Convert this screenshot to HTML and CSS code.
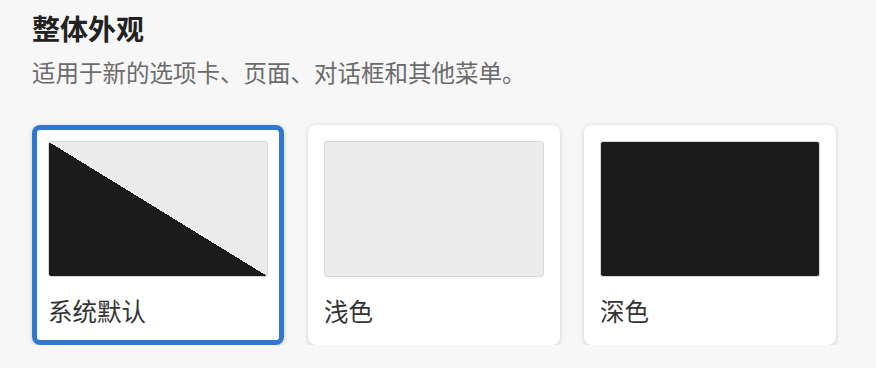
FILE: index.html
```html
<!DOCTYPE html>
<html lang="zh-CN">

<head>
    <meta charset="UTF-8">
    <meta name="viewport" content="width=device-width, initial-scale=1.0">
    <title>整体外观</title>
    <link rel="stylesheet" href="styles.css">
</head>

<body>

    <section class="appearance">
        <h1>整体外观</h1>
        <p class="hint">适用于新的选项卡、页面、对话框和其他菜单。</p>

        <div class="themes">
            <div class="theme selected">
                <div class="preview system"></div>
                <div class="label">系统默认</div>
            </div>
            <div class="theme">
                <div class="preview light"></div>
                <div class="label">浅色</div>
            </div>
            <div class="theme">
                <div class="preview dark"></div>
                <div class="label">深色</div>
            </div>
        </div>
    </section>

</body>

</html>
```

FILE: styles.css
```css
:root {
    --bg: #f7f7f7;
    --text: #222;
    --muted: #6b6b6b;
    --blue: #3177d0;
    --light: #ececec;
    --dark: #1b1b1b;
}

* {
    margin: 0;
    box-sizing: border-box;
    font-family: "Noto Sans CJK SC", "Noto Sans", sans-serif;
}

body {
    background-color: var(--bg);
    color: var(--text);
}

.appearance {
    padding: 8px 32px 0;
}

.appearance h1 {
    font-size: 28px;
    line-height: 40px;
    font-weight: bold;
}

.hint {
    margin-top: 8px;
    font-size: 23.5px;
    line-height: 32px;
    color: var(--muted);
}

.themes {
    display: flex;
    gap: 24px;
    margin-top: 37px;
}

.theme {
    width: 252px;
    height: 220px;
    padding: 16px 16px 0;
    background-color: white;
    border-radius: 8px;
    box-shadow: 0 1px 5px rgba(0, 0, 0, 0.18);
}

/* blue ring drawn inside so the layout doesn't move */
.theme.selected {
    box-shadow: inset 0 0 0 5px var(--blue), 0 1px 5px rgba(0, 0, 0, 0.18);
}

.preview {
    height: 136px;
    border: 1px solid #d8d8d8;
    border-radius: 3px;
}

.preview.light {
    background-color: var(--light);
}

.preview.dark {
    background-color: var(--dark);
}

.preview.system {
    background-image: linear-gradient(to top right, var(--dark) 50%, var(--light) 50%);
}

.label {
    padding: 18px 0;
    font-size: 24.5px;
    line-height: 32px;
    color: #333;
}
```
